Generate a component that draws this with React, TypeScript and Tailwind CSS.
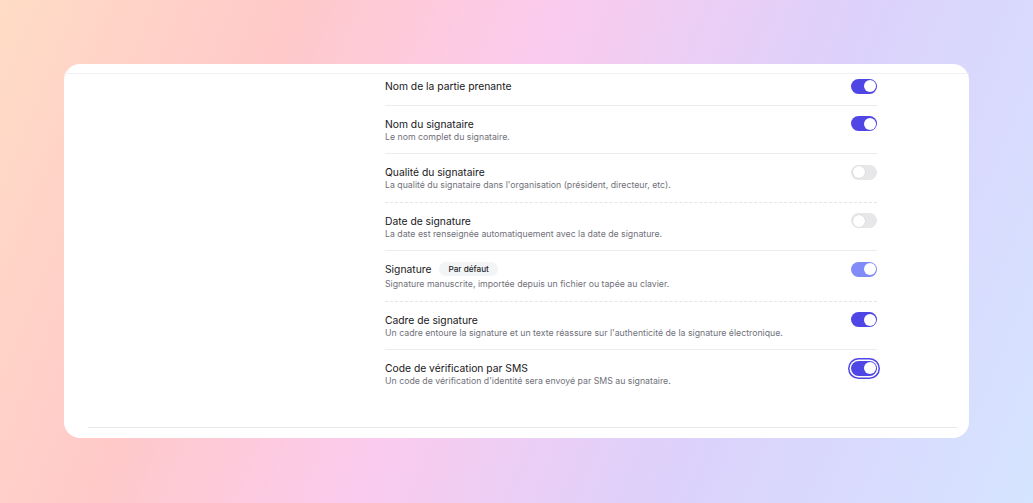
import React from 'react'

type Row = {
  title: string
  description?: string
  badge?: string
  state: 'on' | 'off' | 'disabled' | 'focus'
  dashed?: boolean
}

const rows: Row[] = [
  { title: 'Nom de la partie prenante', state: 'on' },
  { title: 'Nom du signataire', description: 'Le nom complet du signataire.', state: 'on' },
  {
    title: 'Qualité du signataire',
    description: "La qualité du signataire dans l'organisation (président, directeur, etc).",
    state: 'off',
    dashed: true,
  },
  {
    title: 'Date de signature',
    description: 'La date est renseignée automatiquement avec la date de signature.',
    state: 'off',
  },
  {
    title: 'Signature',
    badge: 'Par défaut',
    description: 'Signature manuscrite, importée depuis un fichier ou tapée au clavier.',
    state: 'disabled',
    dashed: true,
  },
  {
    title: 'Cadre de signature',
    description: "Un cadre entoure la signature et un texte réassure sur l'authenticité de la signature électronique.",
    state: 'on',
  },
  {
    title: 'Code de vérification par SMS',
    description: "Un code de vérification d'identité sera envoyé par SMS au signataire.",
    state: 'focus',
  },
]

const Toggle = ({ state }: { state: Row['state'] }) => {
  if (state === 'off') {
    return (
      <div className="flex h-[15px] w-[26px] items-center rounded-full bg-[#e7e7ea] p-[1.5px]">
        <span className="h-[12px] w-[12px] rounded-full bg-white shadow-[0_0_0_0.5px_#d4d4d8]" />
      </div>
    )
  }
  const bg = state === 'disabled' ? 'bg-[#818cf8]' : 'bg-[#4f46e5]'
  const ring = state === 'focus' ? 'ring-[1.5px] ring-[#4f46e5] ring-offset-[1.5px] ring-offset-white' : ''
  return (
    <div className={`flex h-[15px] w-[26px] items-center justify-end rounded-full p-[1.5px] ${bg} ${ring}`}>
      <span className="h-[12px] w-[12px] rounded-full bg-white" />
    </div>
  )
}

export default function App() {
  return (
    <div
      className="h-[503px] w-[1033px] bg-[linear-gradient(112deg,#ffdcc6_0%,#ffc9c9_24%,#fbcbee_45%,#dcd1fb_70%,#d5e4ff_100%)] px-[64px] pt-[64px]"
      style={{ fontFamily: 'Inter, "Noto Sans", sans-serif' }}
    >
      <div className="flex h-[374px] w-[905px] flex-col rounded-[16px] bg-white pt-[9px]">
        <div className="flex flex-1 border-t border-[#f1f1f3]">
          <div className="w-[321px] shrink-0" />
          <div className="flex w-[492px] flex-col">
            {rows.map((row, i) => {
              const last = i === rows.length - 1
              const first = i === 0
              const border = last ? '' : row.dashed ? 'border-b border-dashed border-[#e5e5e8]' : 'border-b border-[#ececef]'
              return (
                <div
                  key={row.title}
                  className={`flex items-start justify-between ${first ? 'pt-[5px] pb-[11px]' : 'pt-[11px] pb-[9.5px]'} ${border}`}
                >
                  <div className="flex flex-col">
                    <div className="flex items-center gap-[8px]">
                      <span className="text-[10.3px] leading-[14px] text-[#18181b]">{row.title}</span>
                      {row.badge && (
                        <span className="rounded-full bg-[#f3f4f6] px-[9px] text-[8.2px] leading-[14px] font-medium text-[#27272a]">
                          {row.badge}
                        </span>
                      )}
                    </div>
                    {row.description && (
                      <span className={`text-[8.75px] leading-[13px] text-[#71717a] ${row.badge ? 'mt-[2px]' : ''}`}>
                        {row.description}
                      </span>
                    )}
                  </div>
                  <div className="mt-[-0.5px]">
                    <Toggle state={row.state} />
                  </div>
                </div>
              )
            })}
          </div>
        </div>
        <div className="mb-[10px] ml-[24px] mr-[12px] border-t border-[#e8e8ee]" />
      </div>
    </div>
  )
}
